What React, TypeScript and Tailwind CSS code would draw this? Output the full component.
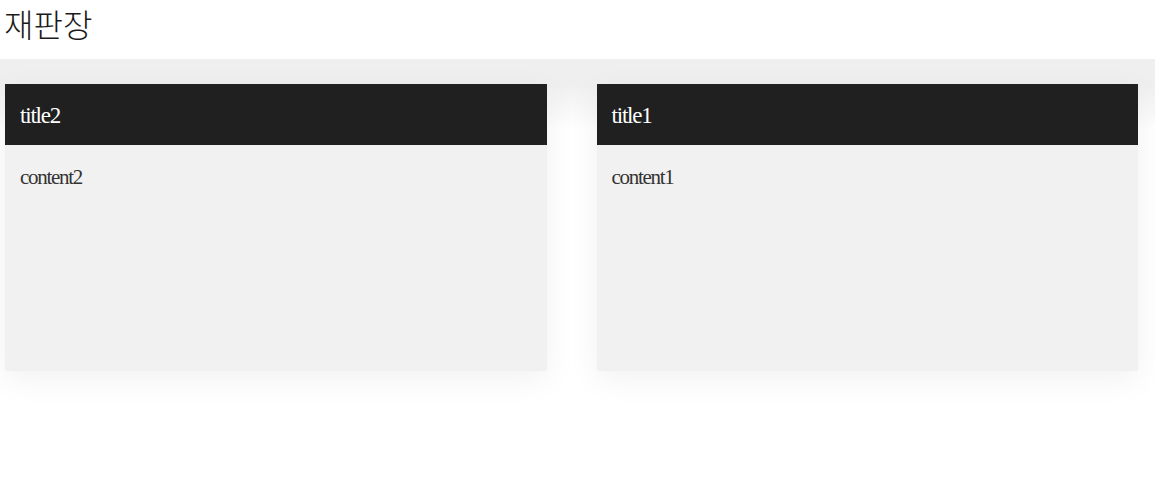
import React from "react";

const cards = [
  { title: "title2", content: "content2" },
  { title: "title1", content: "content1" },
];

export default function App() {
  return (
    <div
      className="min-h-[477px] bg-white"
      style={{ fontFamily: '"Liberation Serif", "Noto Sans CJK KR", serif' }}
    >
      <header className="relative z-10 h-[59px] bg-white pl-[4px] pt-[1px]">
        <h1
          className="text-[32px] leading-[44px] text-[#1a1a1a] font-light"
          style={{ fontFamily: '"Noto Sans CJK KR", serif' }}
        >
          재판장
        </h1>
      </header>
      <div className="h-[25px] bg-[#efefef]" />
      <div className="flex gap-[50px] bg-gradient-to-b from-[#efefef] to-white to-[45px] pl-[5px]">
        {cards.map((c) => (
          <div
            key={c.title}
            className="flex h-[287px] w-[541.5px] flex-col bg-[#f1f1f1] shadow-[0_8px_30px_rgba(0,0,0,0.06)]"
          >
            <div className="flex h-[61px] items-center bg-[#202020] px-[15px] pt-[3px]">
              <span className="text-[23px] leading-[28px] tracking-[-1.2px] text-white">{c.title}</span>
            </div>
            <div className="px-[15px] pt-[20px]">
              <p className="text-[21px] leading-[24px] tracking-[-1.3px] text-[#333]">{c.content}</p>
            </div>
          </div>
        ))}
      </div>
    </div>
  );
}
